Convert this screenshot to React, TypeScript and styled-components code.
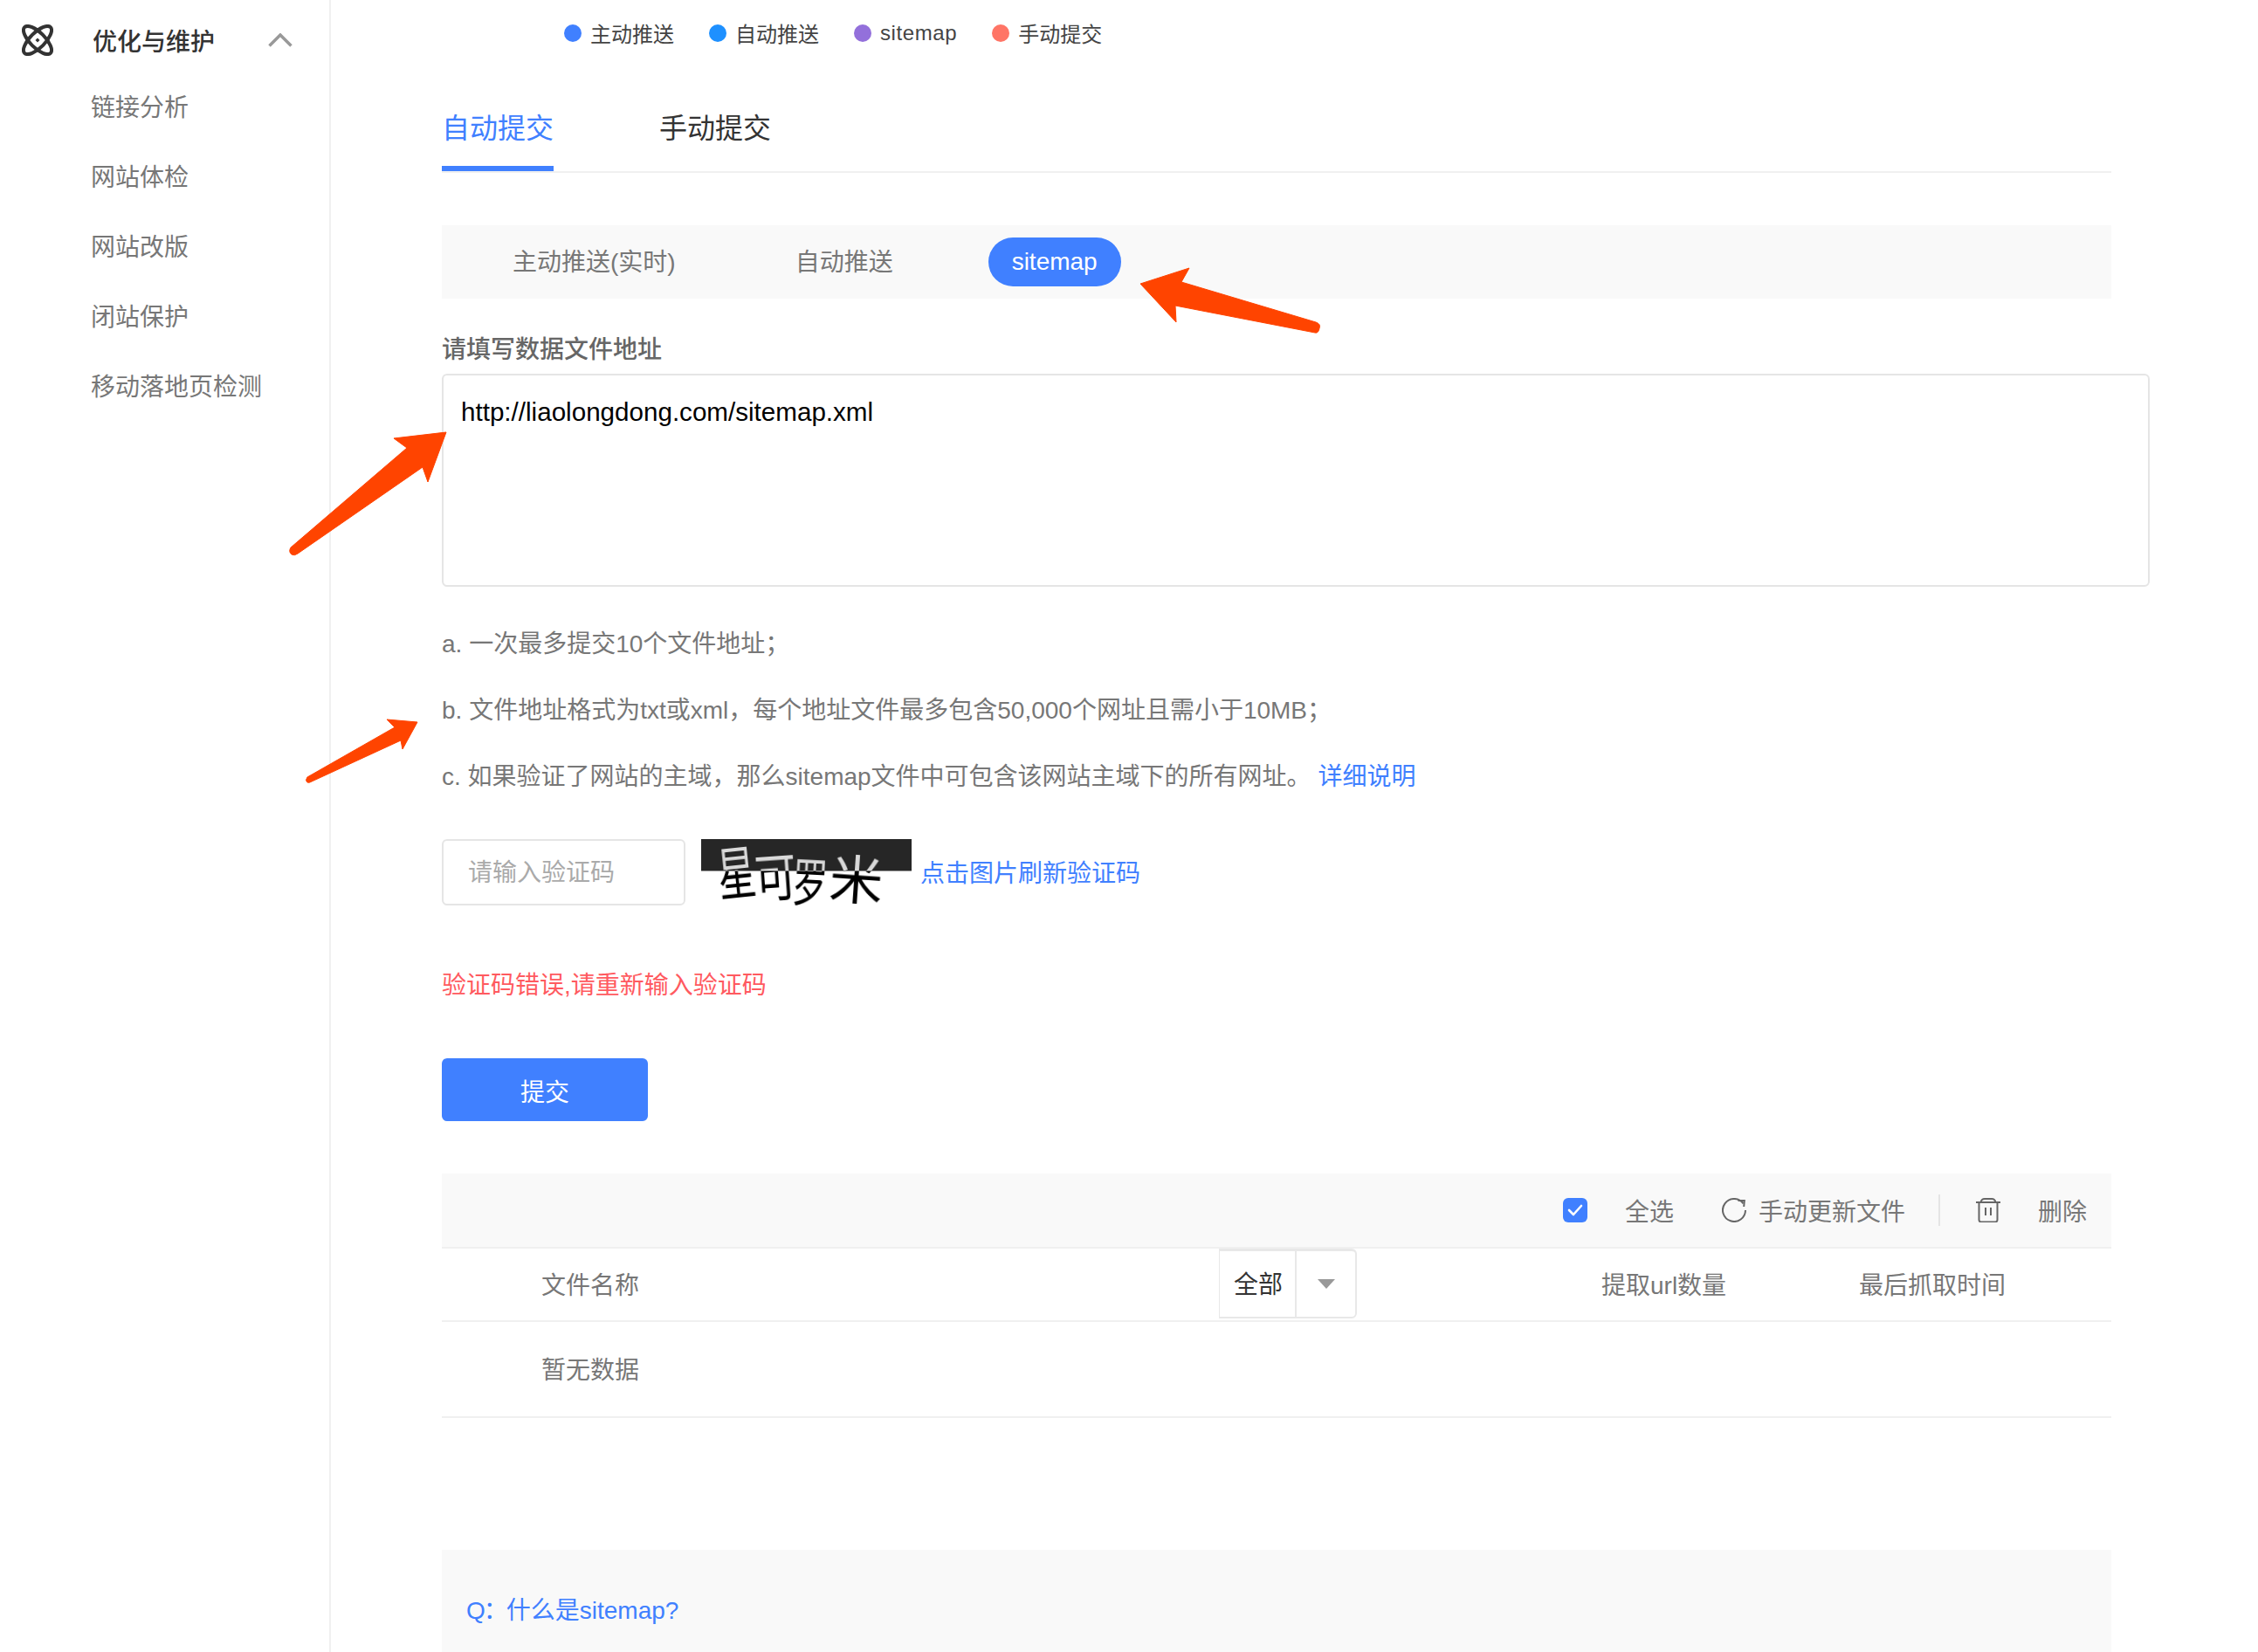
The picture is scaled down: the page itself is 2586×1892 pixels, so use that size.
import React from 'react'
import styled, { createGlobalStyle } from 'styled-components'

const blue = '#4080ff'
const line = '#f0f0f0'

const GlobalStyle = createGlobalStyle`
  html, body {
    margin: 0;
    padding: 0;
    background: #fff;
  }
  body {
    font-family: 'Liberation Sans', 'Noto Sans CJK SC', sans-serif;
    font-size: 28px;
    color: #666;
  }
  * {
    box-sizing: border-box;
  }
`

const Page = styled.div`
  position: relative;
  display: flex;
  width: 2586px;
  height: 1892px;
  overflow: hidden;
`

const Sidebar = styled.aside`
  flex: 0 0 379px;
  padding-top: 7px;
  border-right: 2px solid ${line};
`
const SideTitle = styled.div`
  display: flex;
  align-items: center;
  height: 77px;
  padding-left: 25px;
  font-weight: 500;
  color: #333;
`
const SideTitleText = styled.span`
  margin-left: 45px;
`
const Chevron = styled.svg`
  margin-left: 61px;
`
const SideItem = styled.div`
  height: 80px;
  padding-left: 104px;
  line-height: 80px;
  color: #777;
`

const Main = styled.main`
  flex: 0 0 1912px;
  min-width: 0;
  margin-left: 127px;
`

const Legend = styled.div`
  display: flex;
  align-items: center;
  height: 40px;
  margin-top: 18px;
  padding-left: 140px;
  font-size: 24px;
  color: #444;
`
const LegendItem = styled.div`
  display: flex;
  align-items: center;
  gap: 10px;
  margin-right: 40px;
`
const LegendText = styled.span<{ $latin?: boolean }>`
  padding-bottom: ${({ $latin }) => ($latin ? '0' : '2px')};
  letter-spacing: ${({ $latin }) => ($latin ? '0.6px' : '0')};
`
const Dot = styled.i<{ $color: string }>`
  width: 20px;
  height: 20px;
  border-radius: 50%;
  background: ${({ $color }) => $color};
`

const Tabs = styled.div`
  display: flex;
  gap: 121px;
  margin-top: 64px;
  border-bottom: 2px solid ${line};
`
const Tab = styled.div<{ $active?: boolean }>`
  height: 74px;
  font-size: 32px;
  line-height: 50px;
  color: ${({ $active }) => ($active ? blue : '#333')};
  border-bottom: 6px solid ${({ $active }) => ($active ? blue : 'transparent')};
`

const SubTabs = styled.div`
  display: flex;
  align-items: center;
  gap: 81px;
  height: 84px;
  margin-top: 60px;
  padding-left: 53px;
  background: #f9f9f9;
`
const SubTab = styled.div<{ $active?: boolean }>`
  height: 56px;
  width: ${({ $active }) => ($active ? '152px' : 'auto')};
  padding: 0 ${({ $active }) => ($active ? '0' : '28px')};
  border-radius: 28px;
  text-align: center;
  line-height: ${({ $active }) => ($active ? '56px' : '58px')};
  color: ${({ $active }) => ($active ? '#fff' : '#777')};
  background: ${({ $active }) => ($active ? blue : 'transparent')};
`

const FieldLabel = styled.div`
  margin-top: 39px;
  font-weight: 500;
  line-height: 40px;
  color: #666;
`
const UrlInput = styled.textarea`
  display: block;
  width: 1956px;
  height: 244px;
  margin-top: 7px;
  padding: 22px 20px;
  border: 2px solid #e5e5e5;
  border-radius: 6px;
  outline: none;
  resize: none;
  font: inherit;
  font-size: 29.6px;
  line-height: 40px;
  color: #000;
`

const Notes = styled.div`
  margin-top: 28px;
`
const Note = styled.div`
  height: 76px;
  line-height: 76px;
  color: #777;
`
const TextLink = styled.a`
  color: ${blue};
`

const CaptchaRow = styled.div`
  display: flex;
  align-items: center;
  margin-top: 33px;
`
const CaptchaInput = styled.input`
  width: 279px;
  height: 76px;
  padding: 2px 28px 0;
  border: 2px solid #e5e5e5;
  border-radius: 6px;
  outline: none;
  font: inherit;
  &::placeholder {
    color: #aaa;
    opacity: 1;
  }
`
const CaptchaPicture = styled.div`
  position: relative;
  flex: none;
  width: 241px;
  height: 76px;
  margin: 0 10px 0 18px;
  isolation: isolate;
  background: linear-gradient(#262626 36px, #999 36px, #999 37px, #fff 37px);
`
const CaptchaGlyph = styled.span<{ $x: number; $y: number; $size: number; $rot: number; $sx: number; $sy: number }>`
  position: absolute;
  left: ${({ $x }) => $x}px;
  top: ${({ $y }) => $y}px;
  font-family: 'Noto Sans CJK SC', sans-serif;
  font-size: ${({ $size }) => $size}px;
  line-height: 1;
  color: #fff;
  mix-blend-mode: difference;
  filter: blur(0.5px);
  transform: rotate(${({ $rot }) => $rot}deg) scale(${({ $sx }) => $sx}, ${({ $sy }) => $sy});
`
const CaptchaLink = styled(TextLink)`
  margin-bottom: 3px;
`

const ErrorText = styled.div`
  margin-top: 70px;
  padding-top: 2px;
  height: 41px;
  line-height: 40px;
  color: #ff5a5f;
`
const Submit = styled.button`
  display: block;
  width: 236px;
  height: 72px;
  margin-top: 64px;
  padding: 2px 0 0;
  border: 0;
  border-radius: 6px;
  font: inherit;
  color: #fff;
  background: ${blue};
`

const Toolbar = styled.div`
  display: flex;
  align-items: center;
  justify-content: flex-end;
  height: 86px;
  margin-top: 60px;
  padding-right: 28px;
  border-bottom: 2px solid ${line};
  background: #f9f9f9;
`
const ToolLabel = styled.span<{ $gap?: number }>`
  margin-left: ${({ $gap }) => $gap ?? 0}px;
  color: #777;
`
const CheckBox = styled.span`
  display: flex;
  align-items: center;
  justify-content: center;
  width: 28px;
  height: 28px;
  border-radius: 6px;
  background: ${blue};
`
const ToolIcon = styled.svg<{ $gap: number }>`
  flex: none;
  margin-left: ${({ $gap }) => $gap}px;
`
const ToolDivider = styled.i`
  width: 2px;
  height: 36px;
  margin-left: 38px;
  background: #e5e5e5;
`

const TableRow = styled.div`
  display: grid;
  grid-template-columns: 776px 158px 280px 295px 1fr;
  align-items: center;
  height: 84px;
  padding: 0 0 4px 114px;
  border-bottom: 2px solid ${line};
  color: #777;
`
const EmptyRow = styled.div`
  height: 110px;
  padding-left: 114px;
  border-bottom: 2px solid ${line};
  line-height: 111px;
  color: #777;
`
const Select = styled.div`
  display: flex;
  height: 80px;
  align-self: start;
  border: 2px solid #e8e8e8;
  border-top-width: 3px;
  border-left-width: 1px;
  border-radius: 0 6px 6px 0;
  color: #333;
`
const SelectValue = styled.div`
  flex: 0 0 88px;
  padding-left: 16px;
  border-right: 2px solid #e8e8e8;
  line-height: 77px;
`
const SelectArrow = styled.div`
  flex: 1;
  display: flex;
  align-items: center;
  justify-content: center;
  &::after {
    content: '';
    border-style: solid;
    border-width: 11px 10px 0;
    border-color: #999 transparent transparent;
  }
`

const Faq = styled.section`
  height: 200px;
  margin-top: 151px;
  padding: 50px 0 0 28px;
  line-height: 40px;
  color: ${blue};
  background: #f9f9f9;
`
const FaqMark = styled.span`
  letter-spacing: -2px;
`

const Arrows = styled.svg`
  position: absolute;
  top: 0;
  left: 0;
  pointer-events: none;
`

const legend = [
  { label: '主动推送', color: blue },
  { label: '自动推送', color: '#1e90ff' },
  { label: 'sitemap', color: '#9370db', latin: true },
  { label: '手动提交', color: '#ff7566' },
]

const sideItems = ['链接分析', '网站体检', '网站改版', '闭站保护', '移动落地页检测']

const captchaGlyphs = [
  { char: '星', x: 10, y: 4, size: 60, rot: -6, sx: 0.72, sy: 1.1 },
  { char: '可', x: 57, y: 12, size: 56, rot: -4, sx: 0.85, sy: 1.05 },
  { char: '罗', x: 97, y: 18, size: 56, rot: 3, sx: 0.72, sy: 1.05 },
  { char: '米', x: 148, y: 13, size: 60, rot: 4, sx: 1.02, sy: 1 },
]

export default function App() {
  return (
    <Page>
      <GlobalStyle />
      <Sidebar>
        <SideTitle>
          <svg width="36" height="36" viewBox="0 0 36 36" fill="none" stroke="#333" strokeWidth="4">
            <ellipse cx="18" cy="18" rx="21" ry="8.6" transform="rotate(45 18 18)" />
            <ellipse cx="18" cy="18" rx="21" ry="8.6" transform="rotate(-45 18 18)" />
            <path d="M18 15.5l2.5 2.5-2.5 2.5-2.5-2.5z" fill="#333" stroke="none" />
          </svg>
          <SideTitleText>优化与维护</SideTitleText>
          <Chevron width="28" height="16" viewBox="0 0 28 16" fill="none" stroke="#999" strokeWidth="3.5">
            <path d="M1.5 14.5L14 2l12.5 12.5" />
          </Chevron>
        </SideTitle>
        {sideItems.map((item) => (
          <SideItem key={item}>{item}</SideItem>
        ))}
      </Sidebar>

      <Main>
        <Legend>
          {legend.map((item) => (
            <LegendItem key={item.color}>
              <Dot $color={item.color} />
              <LegendText $latin={item.latin}>{item.label}</LegendText>
            </LegendItem>
          ))}
        </Legend>

        <Tabs>
          <Tab $active>自动提交</Tab>
          <Tab>手动提交</Tab>
        </Tabs>

        <SubTabs>
          <SubTab>主动推送(实时)</SubTab>
          <SubTab>自动推送</SubTab>
          <SubTab $active>sitemap</SubTab>
        </SubTabs>

        <FieldLabel>请填写数据文件地址</FieldLabel>
        <UrlInput readOnly defaultValue="http://liaolongdong.com/sitemap.xml" />

        <Notes>
          <Note>a. 一次最多提交10个文件地址；</Note>
          <Note>b. 文件地址格式为txt或xml，每个地址文件最多包含50,000个网址且需小于10MB；</Note>
          <Note>
            c. 如果验证了网站的主域，那么sitemap文件中可包含该网站主域下的所有网址。 <TextLink>详细说明</TextLink>
          </Note>
        </Notes>

        <CaptchaRow>
          <CaptchaInput placeholder="请输入验证码" />
          <CaptchaPicture>
            {captchaGlyphs.map((g) => (
              <CaptchaGlyph key={g.char} $x={g.x} $y={g.y} $size={g.size} $rot={g.rot} $sx={g.sx} $sy={g.sy}>
                {g.char}
              </CaptchaGlyph>
            ))}
          </CaptchaPicture>
          <CaptchaLink>点击图片刷新验证码</CaptchaLink>
        </CaptchaRow>

        <ErrorText>验证码错误,请重新输入验证码</ErrorText>
        <Submit>提交</Submit>

        <Toolbar>
          <CheckBox>
            <svg width="18" height="14" viewBox="0 0 18 14" fill="none" stroke="#fff" strokeWidth="2.6" strokeLinecap="round" strokeLinejoin="round">
              <path d="M2 7l5 5 9-10" />
            </svg>
          </CheckBox>
          <ToolLabel $gap={43}>全选</ToolLabel>
          <ToolIcon $gap={55} width="28" height="28" viewBox="0 0 28 28" fill="none" stroke="#666" strokeWidth="2">
            <path d="M27 14A13 13 0 1 1 24.5 6.3" />
            <path d="M18.5 3h7.3l-.6 7" />
          </ToolIcon>
          <ToolLabel $gap={14}>手动更新文件</ToolLabel>
          <ToolDivider />
          <ToolIcon $gap={41} width="28" height="28" viewBox="0 0 28 28" fill="none" stroke="#666" strokeWidth="2">
            <path d="M0 5h28M5.5 5C6 2.500 8 1 10 1h8c2 0 4 1.500 4.500 4" />
            <path d="M3.500 5v20a2.500 2.500 0 0 0 2.500 2.500h16a2.500 2.500 0 0 0 2.500-2.500V5M11 11v9M17 11v9" />
          </ToolIcon>
          <ToolLabel $gap={43}>删除</ToolLabel>
        </Toolbar>

        <TableRow>
          <span>文件名称</span>
          <Select>
            <SelectValue>全部</SelectValue>
            <SelectArrow />
          </Select>
          <span />
          <span>提取url数量</span>
          <span>最后抓取时间</span>
        </TableRow>
        <EmptyRow>暂无数据</EmptyRow>

        <Faq>
          <FaqMark>Q：</FaqMark>什么是sitemap?
        </Faq>
      </Main>

      <Arrows width="2586" height="1892" viewBox="0 0 2586 1892" fill="#ff4400" stroke="#ff4400" strokeLinejoin="round">
        <path strokeWidth="1" d="M1306 325L1362 307L1353 323L1507 369Q1513 371 1511 376Q1510 382 1506 381L1346 350L1347 369Z" />
        <path strokeWidth="1" d="M511 495L451 502L466 513L333 627Q330 632 334 635Q337 637 341 634L484 535L490 552Z" />
        <path strokeWidth="1" d="M478 827L443 824L452 833L352 890Q349 894 352 896Q354 897 357 895L459 848L461 858Z" />
      </Arrows>
    </Page>
  )
}
